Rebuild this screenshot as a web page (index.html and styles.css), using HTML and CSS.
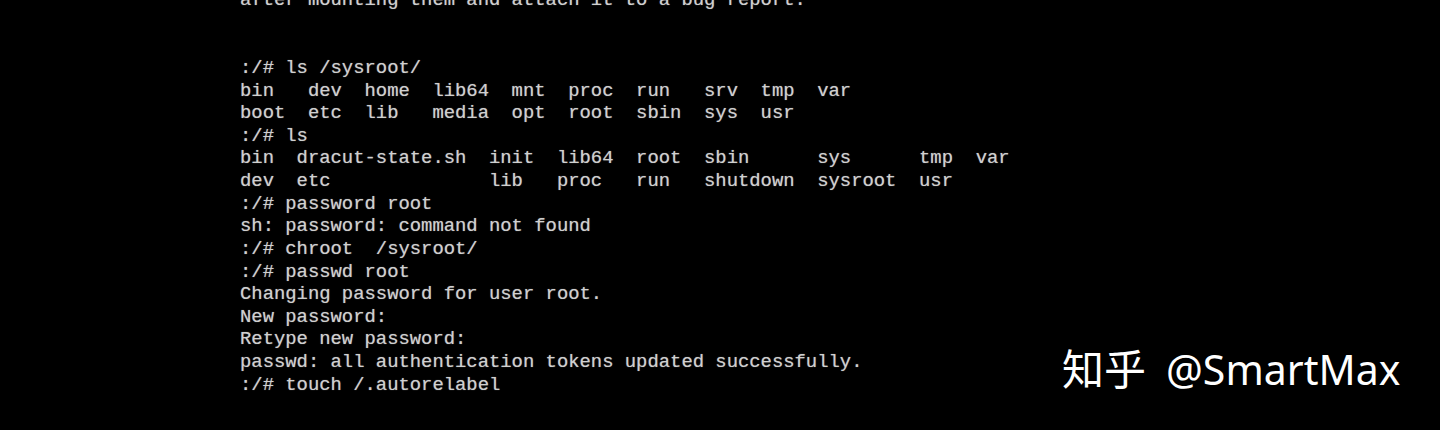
FILE: index.html
```html
<!DOCTYPE html>
<html lang="zh-CN">
<head>
<meta charset="utf-8">
<title>Console</title>
<link rel="stylesheet" href="styles.css">
</head>
<body>
<main class="screen">
<pre class="console">after mounting them and attach it to a bug report.


:/# ls /sysroot/
bin   dev  home  lib64  mnt  proc  run   srv  tmp  var
boot  etc  lib   media  opt  root  sbin  sys  usr
:/# ls
bin  dracut-state.sh  init  lib64  root  sbin      sys      tmp  var
dev  etc              lib   proc   run   shutdown  sysroot  usr
:/# password root
sh: password: command not found
:/# chroot  /sysroot/
:/# passwd root
Changing password for user root.
New password:
Retype new password:
passwd: all authentication tokens updated successfully.
:/# touch /.autorelabel</pre>
<div class="watermark"><span class="wm-cn">知乎</span><span class="wm-user">@SmartMax</span></div>
</main>
</body>
</html>
```

FILE: styles.css
```css
html, body {
  margin: 0;
  padding: 0;
  background: #000;
}
.screen {
  position: relative;
  width: 1440px;
  height: 430px;
  overflow: hidden;
  background: #000;
}
.console {
  margin: -11px 0 0 0;
  padding: 0 0 0 240px;
  font-family: "Liberation Mono", "DejaVu Sans Mono", monospace;
  font-size: 18.87px;
  line-height: 22.62px;
  color: #d0d0d0;
  text-shadow: 0 0 1px rgba(210, 210, 210, 0.6);
  white-space: pre;
}
.watermark {
  position: absolute;
  left: 1062px;
  top: 339px;
  display: flex;
  align-items: baseline;
  gap: 20px;
  font-family: "Noto Sans", "Noto Sans CJK SC", sans-serif;
  font-size: 41px;
  line-height: 56px;
  color: #fff;
  white-space: nowrap;
}
.wm-cn {
  font-family: "Noto Sans CJK SC", sans-serif;
  font-size: 42px;
}
```
